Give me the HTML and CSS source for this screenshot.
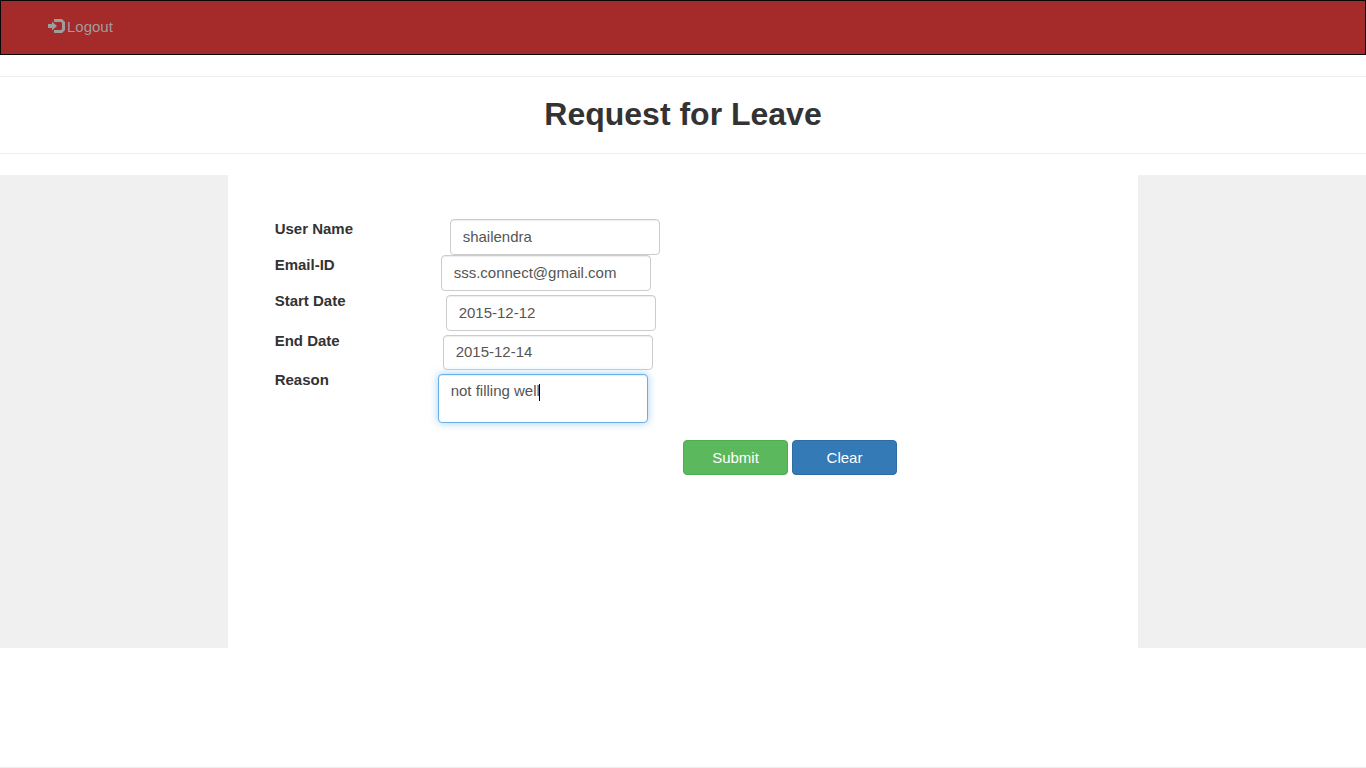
FILE: index.html
```html
<!DOCTYPE html>
<html lang="en">
<head>
  <meta charset="utf-8">
  <meta name="viewport" content="width=device-width, initial-scale=1">
  <title>Request for Leave</title>
  <link rel="stylesheet" href="styles.css">
</head>
<body>
  <nav class="navbar">
    <a class="nav-link" href="#">
      <svg class="icon" width="17" height="16" viewBox="0 0 17 16" aria-hidden="true">
        <path d="M0 6h4V3.500L9 8l-5 4.500V10H0z" fill="currentColor"/>
        <path d="M6 1h8l3 3v8l-3 3H6v-3h7l1-1V5l-1-1H6z" fill="currentColor"/>
      </svg>
      <span>Logout</span>
    </a>
  </nav>

  <hr class="rule">
  <h1 class="title">Request for Leave</h1>
  <hr class="rule">

  <div class="content">
    <aside class="side"></aside>
    <main class="main">
      <form class="form">
        <div class="row">
          <label class="label label-name" for="name">User Name</label>
          <input class="control" id="name" type="text" value="shailendra">
        </div>
        <div class="row">
          <label class="label label-email" for="email">Email-ID</label>
          <input class="control" id="email" type="text" value="sss.connect@gmail.com">
        </div>
        <div class="row">
          <label class="label label-start" for="start">Start Date</label>
          <input class="control control-spaced" id="start" type="text" value="2015-12-12">
        </div>
        <div class="row">
          <label class="label label-end" for="end">End Date</label>
          <input class="control control-spaced control-short" id="end" type="text" value="2015-12-14">
        </div>
        <div class="row">
          <label class="label label-reason" for="reason">Reason</label>
          <div class="reason-field">
            <textarea class="control control-area" id="reason">not filling well</textarea>
            <span class="caret"></span>
          </div>
        </div>
        <div class="actions">
          <button class="button button-submit" type="submit">Submit</button>
          <button class="button button-clear" type="reset">Clear</button>
        </div>
      </form>
    </main>
    <aside class="side"></aside>
  </div>

  <footer class="footer">
    <hr class="rule">
  </footer>
</body>
</html>
```
FILE: styles.css
```css
* {
  box-sizing: border-box;
}

body {
  margin: 0;
  background: #fff;
  color: #333;
  font: 15px/20px "Liberation Sans", Arial, sans-serif;
}

.navbar {
  display: flex;
  padding: 16px 47px 17px;
  background: #a52a2a;
  border: 1px solid #080808;
}

.nav-link {
  display: flex;
  gap: 2px;
  color: #9d9d9d;
  text-decoration: none;
}

.icon {
  margin-top: 1px;
}

.rule {
  height: 1px;
  margin: 21px 0;
  border: 0;
  background: #eee;
}

.title {
  margin: 0;
  padding-bottom: 2px;
  font-size: 32px;
  line-height: 32px;
  text-align: center;
}

.content {
  display: grid;
  grid-template-columns: 1fr 4fr 1fr;
  min-height: 473px;
}

.side {
  background: #f0f0f0;
}

.form {
  padding-top: 44px;
}

.row {
  display: flex;
  align-items: flex-start;
  padding-left: 47px;
}

.label {
  font-weight: bold;
}

.label-name {
  width: 175px;
}

.label-email {
  width: 166px;
}

.label-start {
  width: 171px;
}

.label-end {
  width: 168px;
}

.label-reason {
  width: 163px;
}

.control {
  display: block;
  width: 210px;
  height: 36px;
  margin: 0;
  padding: 6px 12px 8px;
  color: #555;
  font: inherit;
  background: #fff;
  border: 1px solid #ccc;
  border-radius: 4px;
  outline: 0;
  box-shadow: inset 0 1px 1px rgba(0, 0, 0, 0.075);
}

.control-spaced {
  margin-top: 4px;
}

.control-short {
  height: 35px;
}

.reason-field {
  position: relative;
  margin-top: 4px;
}

.control-area {
  height: 49px;
  resize: none;
  overflow: hidden;
  border-color: #66afe9;
  box-shadow: inset 0 1px 1px rgba(0, 0, 0, 0.075), 0 0 8px rgba(102, 175, 233, 0.6);
}

.caret {
  position: absolute;
  top: 10px;
  left: 101px;
  width: 1px;
  height: 17px;
  background: #000;
}

.actions {
  display: flex;
  gap: 4px;
  margin-top: 17px;
  padding-left: 50%;
}

.button {
  width: 105px;
  height: 35px;
  padding: 0;
  color: #fff;
  font: inherit;
  border: 1px solid;
  border-radius: 4px;
}

.button-submit {
  background: #5cb85c;
  border-color: #4cae4c;
}

.button-clear {
  background: #337ab7;
  border-color: #2e6da4;
}

.footer {
  padding-top: 98px;
}

.footer .rule {
  margin-bottom: 0;
}
```
